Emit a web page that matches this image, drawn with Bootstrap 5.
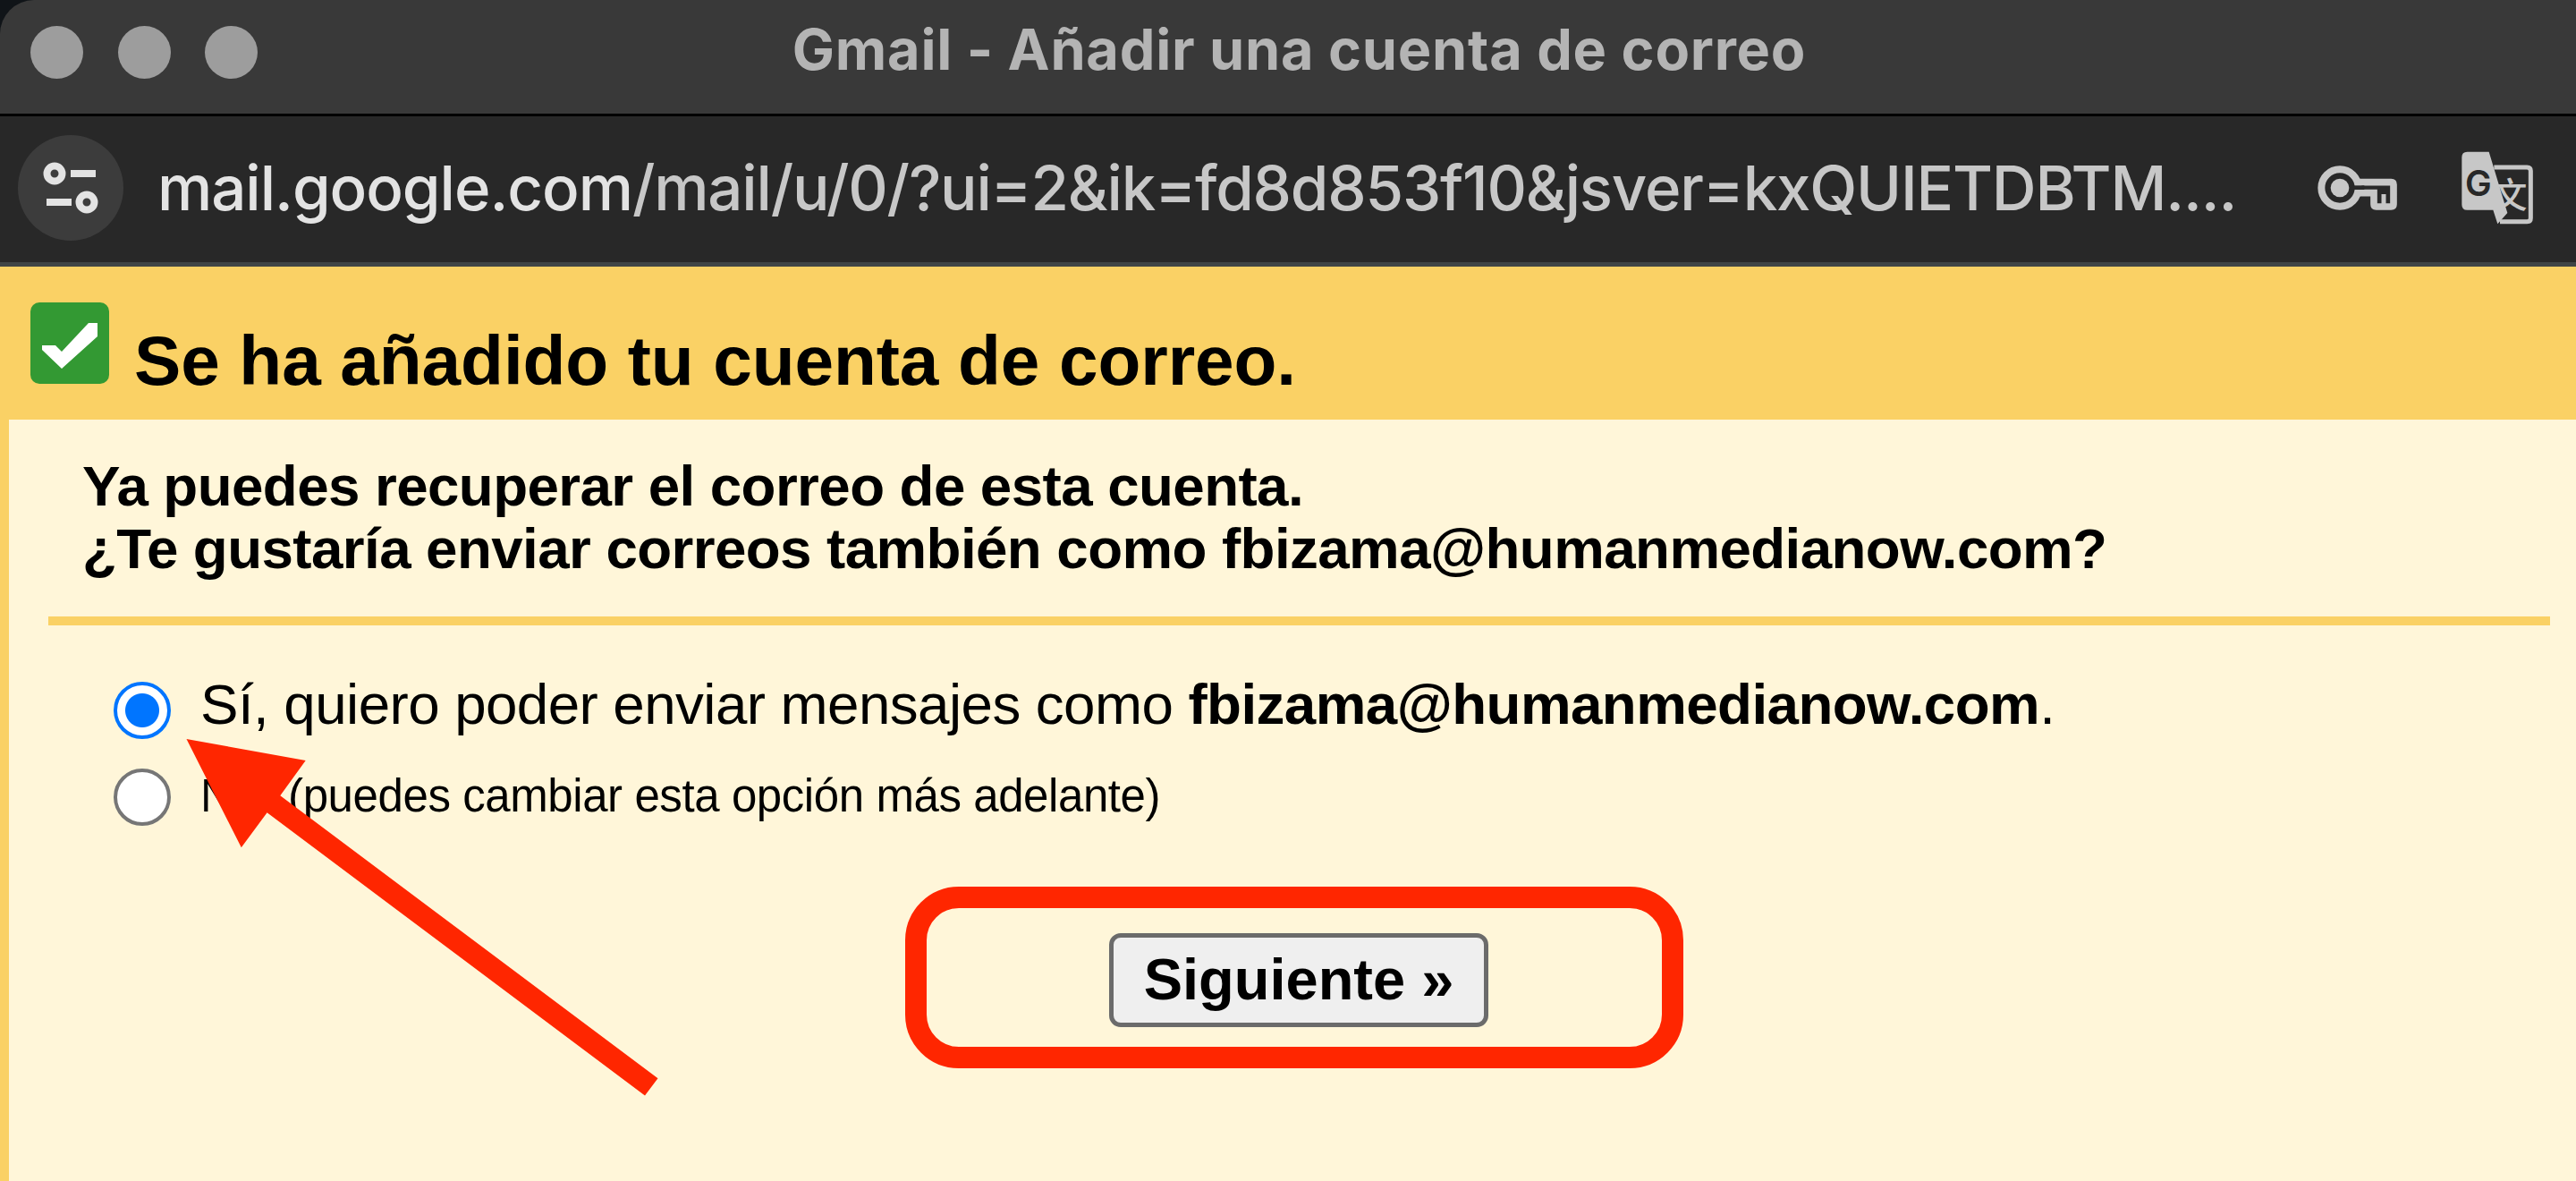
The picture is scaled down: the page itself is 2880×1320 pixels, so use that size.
<!DOCTYPE html>
<html lang="es">
  <head>
    <meta charset="UTF-8" />
    <meta name="viewport" content="width=device-width, initial-scale=1.0" />
    <title>Gmail - Añadir una cuenta de correo</title>
    <link
      href="https://cdn.jsdelivr.net/npm/bootstrap@5.3.0/dist/css/bootstrap.min.css"
      rel="stylesheet"
    />
    <style>
      body {
        background: #101418;
        color: #000;
        font-family: "Liberation Sans", Arial, sans-serif;
      }
      .popup {
        height: 1320px;
      }

      /* Browser chrome */
      .title-bar {
        display: grid;
        grid-template-columns: 1fr auto 1fr;
        height: 130px;
        padding: 0 9px 10px 34px;
        background: #393939;
        border-bottom: 3px solid #000;
        border-top-left-radius: 38px;
      }
      .dots {
        gap: 38.7px;
      }
      .dots span {
        width: 59px;
        height: 59px;
        border-radius: 50%;
        background: #9d9d9d;
      }
      .window-title {
        margin-bottom: 7px;
        font: 700 63px/76px Inter, sans-serif;
        letter-spacing: 0.75px;
        color: #b4b4b4;
      }
      .url-bar {
        height: 168px;
        padding: 0 47px 3px 20px;
        background: #282828;
        border-bottom: 5px solid #404546;
      }
      .site-info {
        width: 118px;
        height: 118px;
        background: #3c3c3c;
      }
      .url-text {
        margin-left: 38px;
        font: 500 69px/84px Inter, sans-serif;
        letter-spacing: -1.2px;
        color: #c7c7c7;
      }
      .url-text span {
        letter-spacing: -1.05px;
        color: #e3e3e3;
      }
      .url-icons {
        gap: 70px;
      }

      /* Page */
      .page-head {
        height: 171px;
        padding: 40px 34px 0;
        background: #fad165;
      }
      .page-head h1 {
        margin: 21px 0 0 28px;
        font-size: 78.4px;
        font-weight: 700;
        line-height: 88px;
        letter-spacing: -0.1px;
      }
      .page-body {
        padding: 39px 29px 0 44px;
        background: #fff6d9;
        border-left: 10px solid #fad165;
      }
      .question {
        padding: 0 0 41px 38px;
        font-size: 63.7px;
        font-weight: 700;
        line-height: 70px;
        letter-spacing: -0.58px;
        border-bottom: 10px solid #fad165;
      }
      .options {
        padding: 53px 0 0 73px;
      }
      .option {
        gap: 33px;
        font-size: 63.7px;
        line-height: 70px;
        letter-spacing: -0.56px;
      }
      .option-alt {
        margin-top: 33px;
        font-size: 51px;
        line-height: 61px;
        letter-spacing: -0.42px;
      }
      .option-alt span {
        margin-right: 20px;
      }
      .option .form-check-input {
        width: 64px;
        height: 64px;
        margin: 0;
        border: 4.5px solid #767676;
        background: #fff;
      }
      .option .form-check-input:checked {
        margin-top: 10px;
        border-color: #0075ff;
        background: radial-gradient(circle, #0075ff 18.5px, #fff 19.5px);
      }
      .highlight {
        width: 870px;
        height: 203px;
        margin: 68px 0 0 958px;
        padding: 6px 0 0 10px;
        border: 24px solid #ff2600;
        border-radius: 60px;
      }
      .btn-next {
        width: 424px;
        height: 105px;
        padding: 0 0 3px;
        border: 5px solid #6b6b6b;
        border-radius: 13px;
        background: #efefef;
        color: #000;
        font-size: 65px;
        font-weight: 700;
        line-height: 1;
      }
      .arrow {
        left: 200px;
        top: 820px;
      }
    </style>
  </head>
  <body>
    <div class="popup d-flex flex-column position-relative overflow-hidden">
      <header class="title-bar align-items-center">
        <div class="dots d-flex"><span></span><span></span><span></span></div>
        <div class="window-title text-nowrap">Gmail - Añadir una cuenta de correo</div>
      </header>

      <div class="url-bar d-flex align-items-center">
        <div class="site-info rounded-circle d-flex align-items-center justify-content-center">
          <svg width="64" height="60" viewBox="0 0 64 60" fill="none" stroke="#e3e3e3" stroke-width="8">
            <circle cx="14" cy="14" r="8.5" />
            <path d="M32 14H60M5 46H33" />
            <circle cx="50" cy="46" r="8.5" />
          </svg>
        </div>
        <div class="url-text text-nowrap"><span>mail.google.com</span>/mail/u/0/?ui=2&amp;ik=fd8d853f10&amp;jsver=kxQUIETDBTM....</div>
        <div class="url-icons d-flex align-items-center ms-auto">
          <!-- saved passwords -->
          <svg width="90" height="52" viewBox="573 253 270 156" fill="none" stroke="#c7c7c7">
            <path d="M705 312H820Q828 312 828 320V386Q828 394 820 394H770Q762 394 762 386V348H705" stroke-width="23" />
            <path d="M795 352V390" stroke-width="15" />
            <circle cx="648" cy="331" r="62" stroke-width="24" fill="#282828" />
            <path d="M690 330H730" stroke="#282828" stroke-width="14" />
            <circle cx="648" cy="331" r="31" fill="#c7c7c7" stroke="none" />
          </svg>
          <!-- translate -->
          <svg width="82" height="82" viewBox="1053 208 246 246">
            <path d="M1165 262H1276Q1288 262 1288 274V432Q1288 444 1276 444H1185" fill="none" stroke="#c7c7c7" stroke-width="15" />
            <path d="M1075 210H1148L1210 415L1177 452L1162 405H1075Q1057 405 1057 387V228Q1057 210 1075 210Z" fill="#c7c7c7" />
            <text x="1068" y="358" font-family="Inter" font-weight="600" font-size="119" fill="#282828">G</text>
            <text x="1160" y="396" font-family="Noto Sans CJK SC" font-weight="500" font-size="116" fill="#c7c7c7">文</text>
          </svg>
        </div>
      </div>

      <div class="page-head d-flex align-items-start">
        <svg width="88" height="91" viewBox="0 0 88 91">
          <rect width="88" height="91" rx="10" fill="#339933" />
          <path d="M13 48H28L35 55L65 23H75V38L35 74L13 53Z" fill="#fff" />
        </svg>
        <h1 class="text-nowrap">Se ha añadido tu cuenta de correo.</h1>
      </div>

      <main class="page-body flex-grow-1">
        <div class="question text-nowrap">
          Ya puedes recuperar el correo de esta cuenta.<br />
          ¿Te gustaría enviar correos también como fbizama@humanmedianow.com?
        </div>

        <form class="options">
          <div class="option d-flex align-items-start">
            <input class="form-check-input" type="radio" name="sendAs" id="sendYes" checked />
            <label class="text-nowrap" for="sendYes">Sí, quiero poder enviar mensajes como <b>fbizama@humanmedianow.com</b>.</label>
          </div>
          <div class="option option-alt d-flex align-items-start">
            <input class="form-check-input" type="radio" name="sendAs" id="sendNo" />
            <label class="text-nowrap" for="sendNo"><span>No</span> (puedes cambiar esta opción más adelante)</label>
          </div>
        </form>

        <div class="highlight d-flex align-items-center justify-content-center">
          <button class="btn btn-next" type="button">Siguiente »</button>
        </div>
      </main>

      <svg class="arrow position-absolute" width="550" height="420" viewBox="200 820 550 420">
        <path d="M208.5 826L341.7 850L313.3 889.3L735.5 1205.3L721 1224.5L298.6 908.3L269.8 947.3Z" fill="#ff2600" />
      </svg>
    </div>

    <script src="https://cdn.jsdelivr.net/npm/bootstrap@5.3.0/dist/js/bootstrap.bundle.min.js"></script>
  </body>
</html>
